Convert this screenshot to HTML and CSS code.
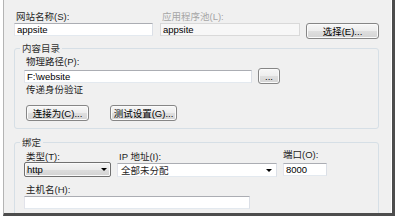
FILE: index.html
```html
<!DOCTYPE html>
<html>
<head>
    <meta charset="utf-8">
    <title>添加网站</title>
    <link rel="stylesheet" href="styles.css">
</head>
<body>
<div class="frame">
    <div class="window">
        <div class="site-row">
            <div class="field name-field">
                <label class="cap">网站名称(S):</label>
                <input class="text" value="appsite">
            </div>
            <div class="field pool-field">
                <label class="cap off">应用程序池(L):</label>
                <input class="text ro" value="appsite" readonly>
            </div>
            <button type="button" class="btn pick">选择(E)...</button>
        </div>

        <fieldset class="group dir">
            <legend>内容目录</legend>
            <label class="cap dir-label">物理路径(P):</label>
            <div class="path-row">
                <input class="text path" value="F:\website">
                <button type="button" class="btn dots">...</button>
            </div>
            <div class="cap auth-label">传递身份验证</div>
            <div class="auth-row">
                <button type="button" class="btn conn">连接为(C)...</button>
                <button type="button" class="btn test">测试设置(G)...</button>
            </div>
        </fieldset>

        <fieldset class="group bind">
            <legend>绑定</legend>
            <div class="bind-row">
                <div class="field type-col">
                    <label class="cap">类型(T):</label>
                    <div class="combo type"><span class="val">http</span><i class="arrow"></i></div>
                </div>
                <div class="field ip-col">
                    <label class="cap">IP 地址(I):</label>
                    <div class="combo ip"><span class="val">全部未分配</span><i class="arrow"></i></div>
                </div>
                <div class="field port-col">
                    <label class="cap port-label">端口(O):</label>
                    <input class="text port" value="8000">
                </div>
            </div>
            <label class="cap host-label">主机名(H):</label>
            <input class="text host" value="">
        </fieldset>
    </div>
</div>
</body>
</html>
```

FILE: styles.css
```css
body { margin: 0; background: #fff; font-family: "Liberation Sans", "Noto Sans CJK SC", sans-serif; font-size: 9.5px; color: #1e1e1e; }

.frame { margin-left: 3px; width: 392px; height: 216px; box-sizing: border-box; border-left: 1px solid #b4b4b4; border-right: 3px solid #4d4d4d; border-bottom: 3px solid #4d4d4d; }
.window { height: 100%; box-sizing: border-box; border-right: 1px solid #fff; background: #f0f0f0; padding: 10px 0 0 10px; overflow: hidden; }

.cap { display: block; line-height: 13px; padding-left: 2px; }
.off { color: #a6a6a6; }
.field { display: flex; flex-direction: column; }

.text { display: block; width: 100%; height: 13px; box-sizing: border-box; margin: 0; padding: 0 2px; border: 1px solid; border-color: #abadb3 #dbdfe6 #e3e9ef #e2e3ea; background: #fff; font: inherit; color: #000; outline: none; }
.text.ro { background: #f7f7f7; border-color: #d9d9d9; }

.btn { height: 16px; box-sizing: border-box; margin: 0; padding: 0; border: 1px solid #868686; border-radius: 3px; background: linear-gradient(#f7f7f7, #ededed 50%, #dfdfdf 51%, #d4d4d4); box-shadow: inset 0 0 0 1px #fbfbfb; font: inherit; color: #000; }

/* top row */
.site-row { display: flex; align-items: flex-start; }
.name-field { width: 139px; }
.pool-field { width: 140px; margin-left: 7px; }
.pick { width: 73px; margin: 13px 0 0 6px; }

/* group boxes */
.group { margin: 3px 0 0 0; width: 365px; min-width: 0; box-sizing: border-box; border: 1px solid #d6dfe6; border-radius: 3px; padding: 0 0 7px 9px; }
.group legend { padding: 0 2px; margin-left: -4px; line-height: 13px; color: #333; }
.bind { margin-top: 7px; padding-bottom: 20px; }

.dir-label { margin-top: 1px; line-height: 12px; }
.path-row { display: flex; align-items: center; height: 16px; }
.path { width: 228px; }
.dots { width: 22px; margin-left: 6px; }
.auth-label { line-height: 12px; }
.auth-row { display: flex; gap: 21px; margin-top: 9px; padding-left: 2px; }
.conn { width: 63px; }
.test { width: 67px; }

/* binding */
.bind-row { display: flex; margin-top: 2px; }
.bind-row .cap { line-height: 11px; }
.type-col { width: 87px; }
.ip-col { width: 160px; margin-left: 6px; }
.port-col { width: 44px; margin-left: 6px; }
.port-label { margin-top: -2px; padding-left: 0; }
.port { margin-top: 3px; }

.combo { display: flex; align-items: center; height: 15px; box-sizing: border-box; padding-left: 2px; }
.combo .val { flex: 1; }
.combo .arrow { width: 0; height: 0; border-left: 3px solid transparent; border-right: 3px solid transparent; border-top: 3px solid #000; margin-right: 3px; }
.combo.type { border: 1px solid #707070; border-radius: 2px; background: linear-gradient(#f4f4f4, #ebebeb 50%, #dddddd 51%, #d2d2d2); box-shadow: inset 0 0 0 1px #fafafa; color: #000; }
.combo.ip { height: 14px; margin-top: 1px; border: 1px solid; border-color: #abadb3 #dbdfe6 #e3e9ef #e2e3ea; background: #fff; padding-left: 3px; }
.combo.ip .arrow { margin-right: 4px; }

.host-label { margin-top: 7px; line-height: 12px; }
.host { width: 226px; }
```
